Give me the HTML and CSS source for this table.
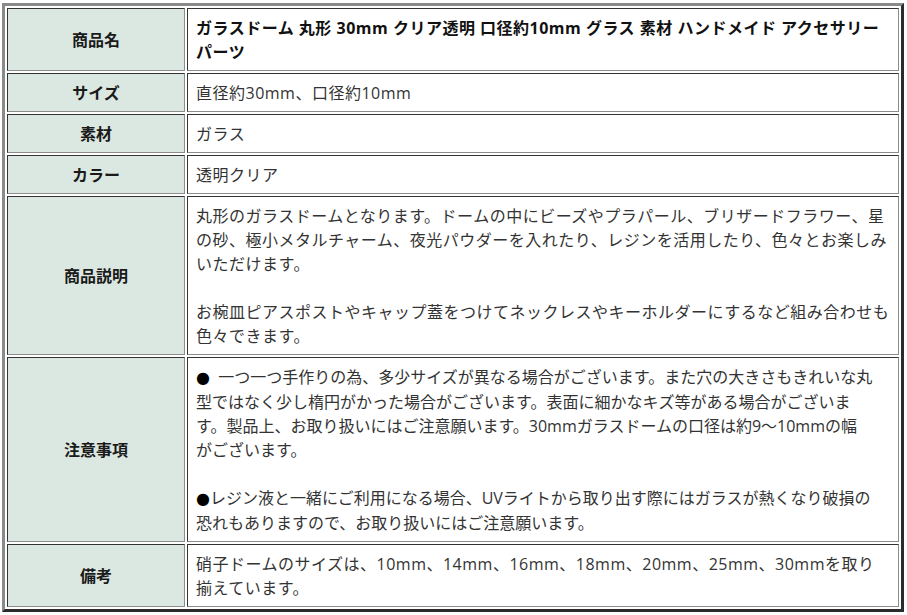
FILE: index.html
```html
<!DOCTYPE html>
<html lang="ja">
<head>
<meta charset="utf-8">
<title>商品情報</title>
<link rel="stylesheet" href="styles.css">
</head>
<body>
<table class="spec">
  <tr>
    <th class="label">商品名</th>
    <td class="value title">ガラスドーム 丸形 30mm クリア透明 口径約10mm グラス 素材 ハンドメイド アクセサリー パーツ</td>
  </tr>
  <tr>
    <th class="label">サイズ</th>
    <td class="value">直径約30mm、口径約10mm</td>
  </tr>
  <tr>
    <th class="label">素材</th>
    <td class="value">ガラス</td>
  </tr>
  <tr>
    <th class="label">カラー</th>
    <td class="value">透明クリア</td>
  </tr>
  <tr>
    <th class="label">商品説明</th>
    <td class="value">丸形のガラスドームとなります。ドームの中にビーズやプラパール、ブリザードフラワー、星の砂、極小メタルチャーム、夜光パウダーを入れたり、レジンを活用したり、色々とお楽しみいただけます。<br><br>お椀皿ピアスポストやキャップ蓋をつけてネックレスやキーホルダーにするなど組み合わせも色々できます。</td>
  </tr>
  <tr>
    <th class="label">注意事項</th>
    <td class="value notes"><span class="bullet">●</span>&nbsp;&nbsp;一つ一つ手作りの為、多少サイズが異なる場合がございます。また穴の大きさもきれいな丸<br>型ではなく少し楕円がかった場合がございます。表面に細かなキズ等がある場合がございま<br>す。製品上、お取り扱いにはご注意願います。30mmガラスドームの口径は約9～10mmの幅<br>がございます。<br><br><span class="bullet">●</span>レジン液と一緒にご利用になる場合、UVライトから取り出す際にはガラスが熱くなり破損の<br>恐れもありますので、お取り扱いにはご注意願います。</td>
  </tr>
  <tr>
    <th class="label">備考</th>
    <td class="value">硝子ドームのサイズは、10mm、14mm、16mm、18mm、20mm、25mm、30mmを取り揃えています。</td>
  </tr>
</table>
</body>
</html>
```

FILE: styles.css
```css
html, body {
  margin: 0;
  padding: 0;
  background: #ffffff;
}

body {
  padding: 3px 0 0 2px;
  font-family: "Open Sans", "Noto Sans CJK JP", sans-serif;
}

.spec {
  width: 902px;
  border-collapse: separate;
  border-spacing: 2px;
  border-style: solid;
  border-width: 3px;
  border-color: #8a8a8a #2b2b2b #2b2b2b #8a8a8a;
  font-size: 16px;
  line-height: 24px;
}

.spec th,
.spec td {
  border-style: solid;
  border-width: 1px;
  border-color: #333333 #8c8c8c #8c8c8c #333333;
  padding: 7px 8px 6px 8px;
  vertical-align: middle;
}

.label {
  width: 160px;
  background: #dbe8e1;
  color: #1a1a1a;
  font-weight: bold;
  text-align: center;
}

.value {
  background: #ffffff;
  color: #333333;
  text-align: left;
  letter-spacing: 0.5px;
}

.value.notes {
  letter-spacing: 0;
}

.bullet {
  font-family: "DejaVu Sans", sans-serif;
  color: #000000;
}

.value.title {
  color: #111111;
  font-weight: bold;
  letter-spacing: 0.5px;
}
```
